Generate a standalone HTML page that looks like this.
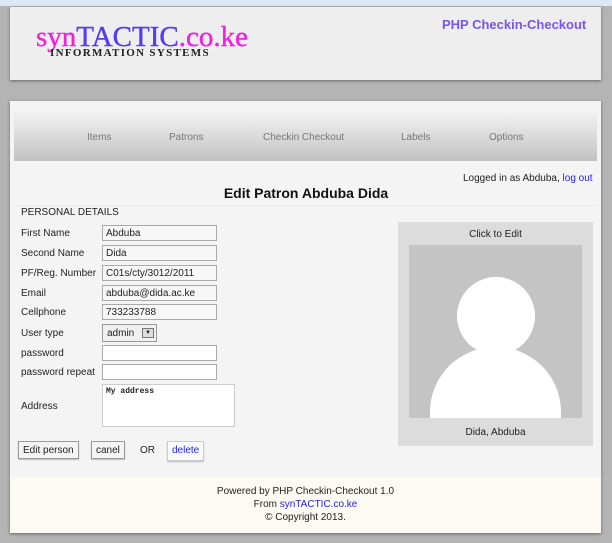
<!DOCTYPE html>
<html><head><style>
*{margin:0;padding:0;box-sizing:border-box}
body{width:612px;height:543px;background:#b4b4b4;font-family:"Liberation Sans",sans-serif;font-size:10px;color:#222;position:relative;overflow:hidden}
.abs{position:absolute}
.top{left:0;top:0;width:612px;height:6px;background:#dce8f6}
.hdr{left:10px;top:7px;width:591px;height:73px;background:#eee;box-shadow:0 1px 3px #666}
.main{left:10px;top:101px;width:591px;height:432px;background:#f4f4f4;box-shadow:0 1px 3px #666}
.nav{left:14px;top:112px;width:583px;height:49px;background:linear-gradient(#f2f2f2,#c2c2c2)}
.nav span{position:absolute;top:20px;color:#777;font-size:10px}
.foot{left:10px;top:477px;width:591px;height:56px;background:#fcfaf3;text-align:center;font-size:10px;line-height:13px;padding-top:8px}
a{color:#2222ee;text-decoration:none}
.lbl{position:absolute;left:21px;font-size:10px}
.inp{position:absolute;left:102px;width:115px;height:16px;border:1px solid #aaa;background:#f7f7f7;font-size:10px;padding:2px 3px 0;line-height:12px}
.btn{position:absolute;height:18px;border:1px solid #999;background:#f4f4f4;font-size:10px;line-height:16px;padding:0 4px;box-shadow:0 1px 1px #bbb}
</style></head><body>
<div class="abs top"></div>
<div class="abs hdr"></div>
<div class="abs" style="left:36px;top:21px;font-family:'Liberation Serif',serif;font-size:29px;letter-spacing:0px;line-height:32px;-webkit-text-stroke:0.4px currentColor"><span style="color:#f020e0">syn</span><span style="color:#5a3af0">TACTIC</span><span style="color:#f020e0">.co.ke</span></div>
<div class="abs" style="left:50px;top:48px;font-family:'Liberation Serif',serif;font-weight:bold;font-size:11px;letter-spacing:1.3px;line-height:11px;color:#222">INFORMATION SYSTEMS</div>
<div class="abs" style="left:442px;top:17px;font-weight:bold;font-size:13px;color:#7755ee">PHP Checkin-Checkout</div>
<div class="abs main"></div>
<div class="abs nav"><span style="left:73px">Items</span><span style="left:155px">Patrons</span><span style="left:249px">Checkin Checkout</span><span style="left:387px">Labels</span><span style="left:475px">Options</span></div>
<div class="abs" style="left:463px;top:173px;font-size:10px">Logged in as Abduba, <a>log out</a></div>
<div class="abs" style="left:0;width:612px;top:185px;text-align:center;font-size:14px;font-weight:bold;color:#111">Edit Patron Abduba Dida</div>
<div class="abs" style="left:14px;top:205px;width:583px;height:1px;background:#e8e8e8"></div>
<div class="abs" style="left:21px;top:207px;font-size:10px">PERSONAL DETAILS</div>
<div class="lbl" style="top:228px">First Name</div><div class="inp" style="top:225px">Abduba</div>
<div class="lbl" style="top:248px">Second Name</div><div class="inp" style="top:245px">Dida</div>
<div class="lbl" style="top:268px">PF/Reg. Number</div><div class="inp" style="top:265px">C01s/cty/3012/2011</div>
<div class="lbl" style="top:288px">Email</div><div class="inp" style="top:285px">abduba@dida.ac.ke</div>
<div class="lbl" style="top:307px">Cellphone</div><div class="inp" style="top:304px">733233788</div>
<div class="lbl" style="top:328px">User type</div>
<div class="abs" style="left:102px;top:324px;width:55px;height:18px;border:1px solid #999;background:#f0f0f0;font-size:10px;padding:3px 4px 0">admin<span style="position:absolute;right:2px;top:3px;width:12px;height:10px;border:1px solid #777;background:#ddd;font-size:6px;text-align:center;line-height:9px">▼</span></div>
<div class="lbl" style="top:348px">password</div><div class="inp" style="top:345px;background:#fff"></div>
<div class="lbl" style="top:367px">password repeat</div><div class="inp" style="top:364px;background:#fff"></div>
<div class="lbl" style="top:401px">Address</div>
<div class="abs" style="left:102px;top:384px;width:133px;height:43px;border:1px solid #ccc;background:#fff;font-family:'Liberation Mono',monospace;font-size:8px;font-weight:bold;padding:2px 3px">My address</div>
<div class="btn" style="left:18px;top:441px;line-height:18px">Edit person</div>
<div class="btn" style="left:91px;top:441px;line-height:18px">canel</div>
<div class="abs" style="left:140px;top:445px">OR</div>
<div class="btn" style="left:167px;top:441px;height:20px;border-color:#ccc;background:#fafafa;line-height:18px"><a>delete</a></div>
<div class="abs" style="left:398px;top:222px;width:195px;height:224px;background:#dcdcdc"></div>
<div class="abs" style="left:398px;top:229px;width:195px;text-align:center">Click to Edit</div>
<div class="abs" style="left:409px;top:245px;width:173px;height:173px;background:#c4c4c4;overflow:hidden">
<div class="abs" style="left:48px;top:32px;width:78px;height:78px;border-radius:50%;background:#fff"></div>
<div class="abs" style="left:21px;top:102px;width:131px;height:150px;border-radius:65px 65px 0 0;background:#fff"></div>
</div>
<div class="abs" style="left:398px;top:427px;width:195px;text-align:center">Dida, Abduba</div>
<div class="abs foot">Powered by PHP Checkin-Checkout 1.0<br>From <a>synTACTIC.co.ke</a><br>© Copyright 2013.</div>
</body></html>
